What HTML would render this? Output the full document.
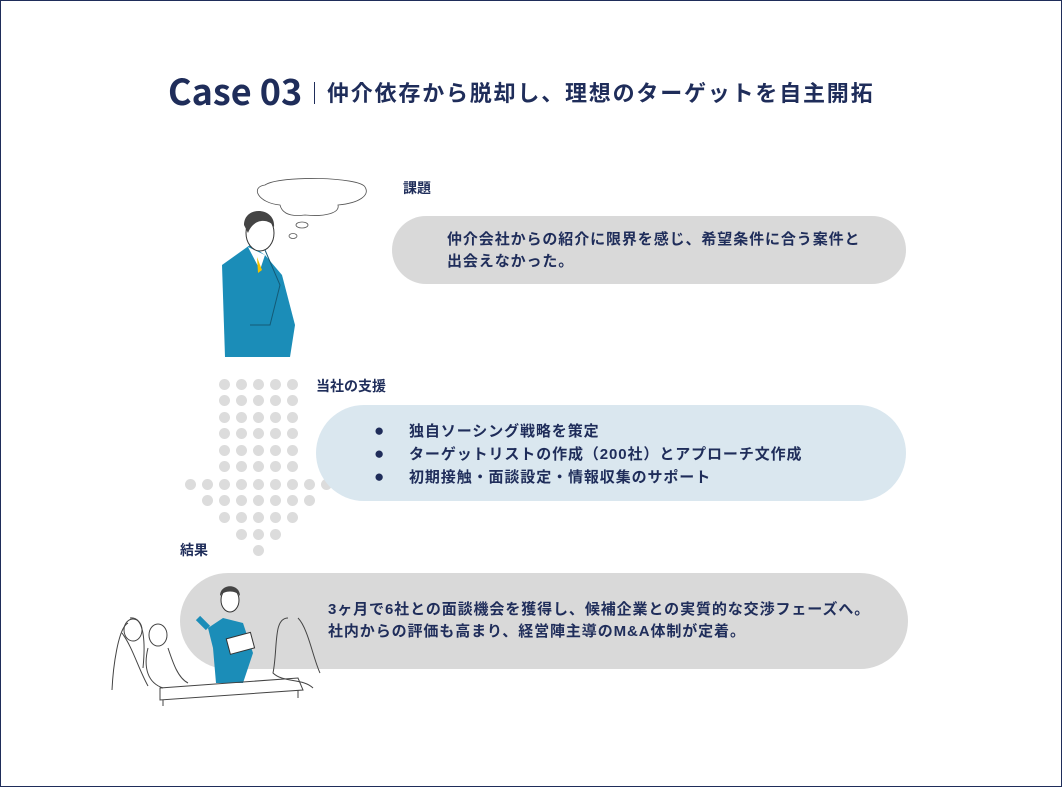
<!DOCTYPE html>
<html><head><meta charset="utf-8"><style>
*{margin:0;padding:0;box-sizing:border-box}
body{width:1062px;height:787px;background:#fff;position:relative;overflow:hidden;font-family:"Liberation Sans","Noto Sans CJK JP",sans-serif;color:#1f2d5a;font-weight:bold}
.frame{position:absolute;left:0;top:0;width:1062px;height:787px;border:1px solid #1f2d5a}
.abs{position:absolute;white-space:nowrap}
.bub{position:absolute;border-radius:48px}
.t{font-size:15px;line-height:22px;letter-spacing:0.9px}
.dot{position:absolute;width:11px;height:11px;border-radius:50%;background:#dcdcdc}
</style></head><body>
<div class="frame"></div>
<div class="abs" style="left:168px;top:68px;font-size:36px;line-height:44px;font-family:'Noto Sans CJK JP','Liberation Sans',sans-serif">Case 03</div>
<div class="abs" style="left:314px;top:82px;width:1px;height:22px;background:#1f2d5a"></div>
<div class="abs" style="left:327px;top:79px;font-size:22px;line-height:30px;letter-spacing:1.8px">仲介依存から脱却し、理想のターゲットを自主開拓</div>

<div class="abs" style="left:403px;top:178px;font-size:14px">課題</div>
<div class="bub" style="left:392px;top:216px;width:514px;height:68px;background:#d9d9d9;border-radius:34px"></div>
<div class="abs t" style="left:447px;top:229px">仲介会社からの紹介に限界を感じ、希望条件に合う案件と<br>出会えなかった。</div>

<div id="dots"></div>
<div class="abs" style="left:316px;top:376px;font-size:14px">当社の支援</div>
<div class="bub" style="left:316px;top:405px;width:590px;height:96px;background:#dae7ef"></div>
<div class="abs t" style="left:374px;top:420px">
<div><span style="display:inline-block;width:35px;font-size:17px">●</span>独自ソーシング戦略を策定</div>
<div><span style="display:inline-block;width:35px;font-size:17px">●</span>ターゲットリストの作成（200社）とアプローチ文作成</div>
<div><span style="display:inline-block;width:35px;font-size:17px">●</span>初期接触・面談設定・情報収集のサポート</div>
</div>

<div class="abs" style="left:180px;top:540px;font-size:14px">結果</div>
<div class="bub" style="left:180px;top:573px;width:728px;height:96px;background:#d9d9d9"></div>
<div class="abs t" style="left:328px;top:599px">3ヶ月で6社との面談機会を獲得し、候補企業との実質的な交渉フェーズへ。<br>社内からの評価も高まり、経営陣主導のM&amp;A体制が定着。</div>

<svg class="abs" style="left:210px;top:175px" width="165" height="185" viewBox="0 0 165 185">
<path d="M55 10 C40 12 48 28 70 30 C72 38 80 42 95 40 C115 42 130 38 128 30 C150 28 160 20 155 12 C150 2 70 0 55 10Z" fill="#fff" stroke="#555" stroke-width="0.8"/>
<ellipse cx="92" cy="50" rx="6" ry="3" fill="#fff" stroke="#555" stroke-width="0.8"/>
<ellipse cx="83" cy="61" rx="4" ry="2.5" fill="#fff" stroke="#555" stroke-width="0.8"/>
<path d="M12 90 L40 70 L55 80 L72 100 L85 150 L80 182 L15 182 Z" fill="#1b8db8"/>
<path d="M38 72 L50 95 L55 80Z" fill="#fff"/>
<path d="M47 82 L52 95 L48 98Z" fill="#f2c200"/>
<ellipse cx="50" cy="58" rx="14" ry="18" fill="#fff" stroke="#333"/>
<path d="M34 50 C34 30 66 32 64 52 C60 44 44 42 38 58Z" fill="#444"/>
<path d="M55 75 L70 110 L60 150 L40 150" fill="none" stroke="#145a76" stroke-width="1"/>
</svg>

<svg class="abs" style="left:108px;top:578px" width="215" height="130" viewBox="0 0 215 130">
<path d="M100 50 L115 40 L135 45 L145 75 L135 105 L108 105 L105 70Z" fill="#1b8db8"/>
<ellipse cx="122" cy="22" rx="9" ry="12" fill="#fff" stroke="#333"/>
<path d="M112 18 C112 5 132 5 132 18 C128 12 116 12 112 18Z" fill="#444"/>
<path d="M100 50 L90 40" stroke="#1b8db8" stroke-width="6"/>
<rect x="120" y="58" width="25" height="16" fill="#fff" stroke="#333" transform="rotate(-15 130 66)"/>
<g fill="none" stroke="#444" stroke-width="1">
<path d="M20 45 C10 50 5 90 4 112 M22 40 C35 38 38 60 35 90 M14 55 C25 70 30 90 40 108"/>
<ellipse cx="25" cy="52" rx="9" ry="11"/>
<ellipse cx="50" cy="57" rx="9" ry="11"/>
<path d="M40 70 C35 90 40 105 55 110 M60 70 C65 85 70 100 80 105"/>
<path d="M180 40 C165 40 170 70 165 95 C175 105 195 100 205 110 M190 40 C200 50 205 80 212 95"/>
<path d="M52 110 L190 100 L195 112 L52 122Z"/>
<path d="M55 122 L55 128 M190 112 L190 120"/>
</g>
</svg>

<script>
var rows=[[384,5,224],[400,5,224],[417,5,224],[433,5,224],[450,5,224],[466,5,224],[484,9,190],[500,7,207],[517,5,224],[534,3,241],[550,1,258]];
var h='';rows.forEach(function(r){for(var i=0;i<r[1];i++)h+='<div class="dot" style="left:'+(r[2]+i*17-5)+'px;top:'+(r[0]-5)+'px"></div>';});
document.getElementById('dots').innerHTML=h;
</script>
</body></html>
